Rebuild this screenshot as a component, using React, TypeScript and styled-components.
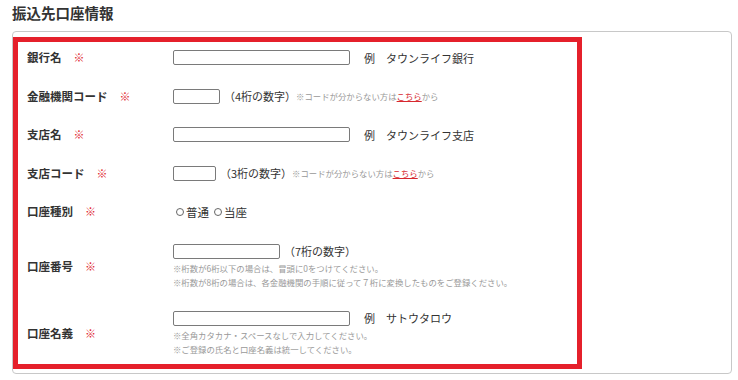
import * as React from 'react';
import styled, { createGlobalStyle } from 'styled-components';

const GlobalStyle = createGlobalStyle`
    html, body {
        margin: 0;
        padding: 0;
        background: #fff;
    }
    body {
        font-family: "Noto Sans CJK JP", "Noto Sans", sans-serif;
        color: #333;
    }
`;

const Page = styled.div`
    width: 738px;
    height: 380px;
    box-sizing: border-box;
    padding: 0 6px 0 12px;
`;

const Title = styled.h2`
    margin: 0;
    height: 31px;
    box-sizing: border-box;
    padding-top: 3px;
    line-height: 20px;
    font-size: 14.5px;
    font-weight: bold;
    color: #333;
`;

const Panel = styled.div`
    border: 1px solid #c8c8c8;
    border-radius: 4px;
    padding: 5px 0 4px 0;
`;

const Highlight = styled.div`
    width: 569px;
    box-sizing: border-box;
    border: 5px solid #e5202b;
    padding: 8px 0 8px 9px;
    display: flex;
    flex-direction: column;
`;

const Row = styled.div<{ $space?: number }>`
    display: flex;
    align-items: center;
    margin-top: ${(p) => p.$space ?? 23.5}px;

    &:first-child {
        margin-top: 0;
    }
`;

const Label = styled.div`
    width: 146px;
    flex: none;
    display: flex;
    align-items: center;
    font-size: 11.5px;
    line-height: 15px;
    font-weight: bold;
    color: #333;
`;

const Required = styled.span`
    margin-left: 12px;
    font-size: 11px;
    font-weight: normal;
    color: #e0262d;
`;

const Field = styled.div`
    display: flex;
    flex-direction: column;
`;

const InputLine = styled.div`
    display: flex;
    align-items: center;
    height: 15px;
`;

const TextInput = styled.input<{ $width: number }>`
    width: ${(p) => p.$width}px;
    height: 15px;
    box-sizing: border-box;
    margin: 0;
    padding: 0 3px;
    border: 1px solid #7a7a7a;
    border-radius: 2px;
    background: #fff;
`;

const Example = styled.span`
    margin-left: 14px;
    font-size: 11px;
    color: #333;
    white-space: pre;
`;

const Hint = styled.span`
    margin-left: 4px;
    font-size: 11px;
    color: #333;
    white-space: nowrap;
`;

const SmallNote = styled.span`
    font-size: 8.4px;
    color: #999;
    white-space: nowrap;
`;

const Link = styled.a`
    color: #d7282f;
    text-decoration: underline;
`;

const Notes = styled.div`
    margin-top: 2px;
    font-size: 8.4px;
    line-height: 14px;
    color: #999;
    white-space: nowrap;
`;

const RadioGroup = styled.div`
    display: flex;
    align-items: center;
    height: 15px;
    gap: 5px;
    padding-left: 3px;
`;

const RadioOption = styled.label`
    display: flex;
    align-items: center;
    gap: 2px;
    font-size: 11.5px;
    color: #333;
`;

const Circle = styled.span`
    width: 8px;
    height: 8px;
    box-sizing: border-box;
    border: 1px solid #666;
    border-radius: 50%;
`;

function CodeNote() {
    return (
        <SmallNote>
            ※コードが分からない方は<Link>こちら</Link>から
        </SmallNote>
    );
}

function App(): React.ReactElement {
    return (
        <Page>
            <GlobalStyle />
            <Title>振込先口座情報</Title>
            <Panel>
                <Highlight>
                    <Row>
                        <Label>
                            銀行名<Required>※</Required>
                        </Label>
                        <InputLine>
                            <TextInput $width={177} />
                            <Example>例　タウンライフ銀行</Example>
                        </InputLine>
                    </Row>
                    <Row>
                        <Label>
                            金融機関コード<Required>※</Required>
                        </Label>
                        <InputLine>
                            <TextInput $width={47} />
                            <Hint>（4桁の数字）</Hint>
                            <CodeNote />
                        </InputLine>
                    </Row>
                    <Row>
                        <Label>
                            支店名<Required>※</Required>
                        </Label>
                        <InputLine>
                            <TextInput $width={177} />
                            <Example>例　タウンライフ支店</Example>
                        </InputLine>
                    </Row>
                    <Row>
                        <Label>
                            支店コード<Required>※</Required>
                        </Label>
                        <InputLine>
                            <TextInput $width={43} />
                            <Hint>（3桁の数字）</Hint>
                            <CodeNote />
                        </InputLine>
                    </Row>
                    <Row>
                        <Label>
                            口座種別<Required>※</Required>
                        </Label>
                        <RadioGroup>
                            <RadioOption>
                                <Circle />
                                普通
                            </RadioOption>
                            <RadioOption>
                                <Circle />
                                当座
                            </RadioOption>
                        </RadioGroup>
                    </Row>
                    <Row $space={24.5}>
                        <Label>
                            口座番号<Required>※</Required>
                        </Label>
                        <Field>
                            <InputLine>
                                <TextInput $width={107} />
                                <Hint>（7桁の数字）</Hint>
                            </InputLine>
                            <Notes>
                                ※桁数が6桁以下の場合は、冒頭に0をつけてください。
                                <br />
                                ※桁数が8桁の場合は、各金融機関の手順に従って７桁に変換したものをご登録ください。
                            </Notes>
                        </Field>
                    </Row>
                    <Row $space={22}>
                        <Label>
                            口座名義<Required>※</Required>
                        </Label>
                        <Field>
                            <InputLine>
                                <TextInput $width={177} />
                                <Example>例　サトウタロウ</Example>
                            </InputLine>
                            <Notes>
                                ※全角カタカナ・スペースなしで入力してください。
                                <br />
                                ※ご登録の氏名と口座名義は統一してください。
                            </Notes>
                        </Field>
                    </Row>
                </Highlight>
            </Panel>
        </Page>
    );
}

export default App;
